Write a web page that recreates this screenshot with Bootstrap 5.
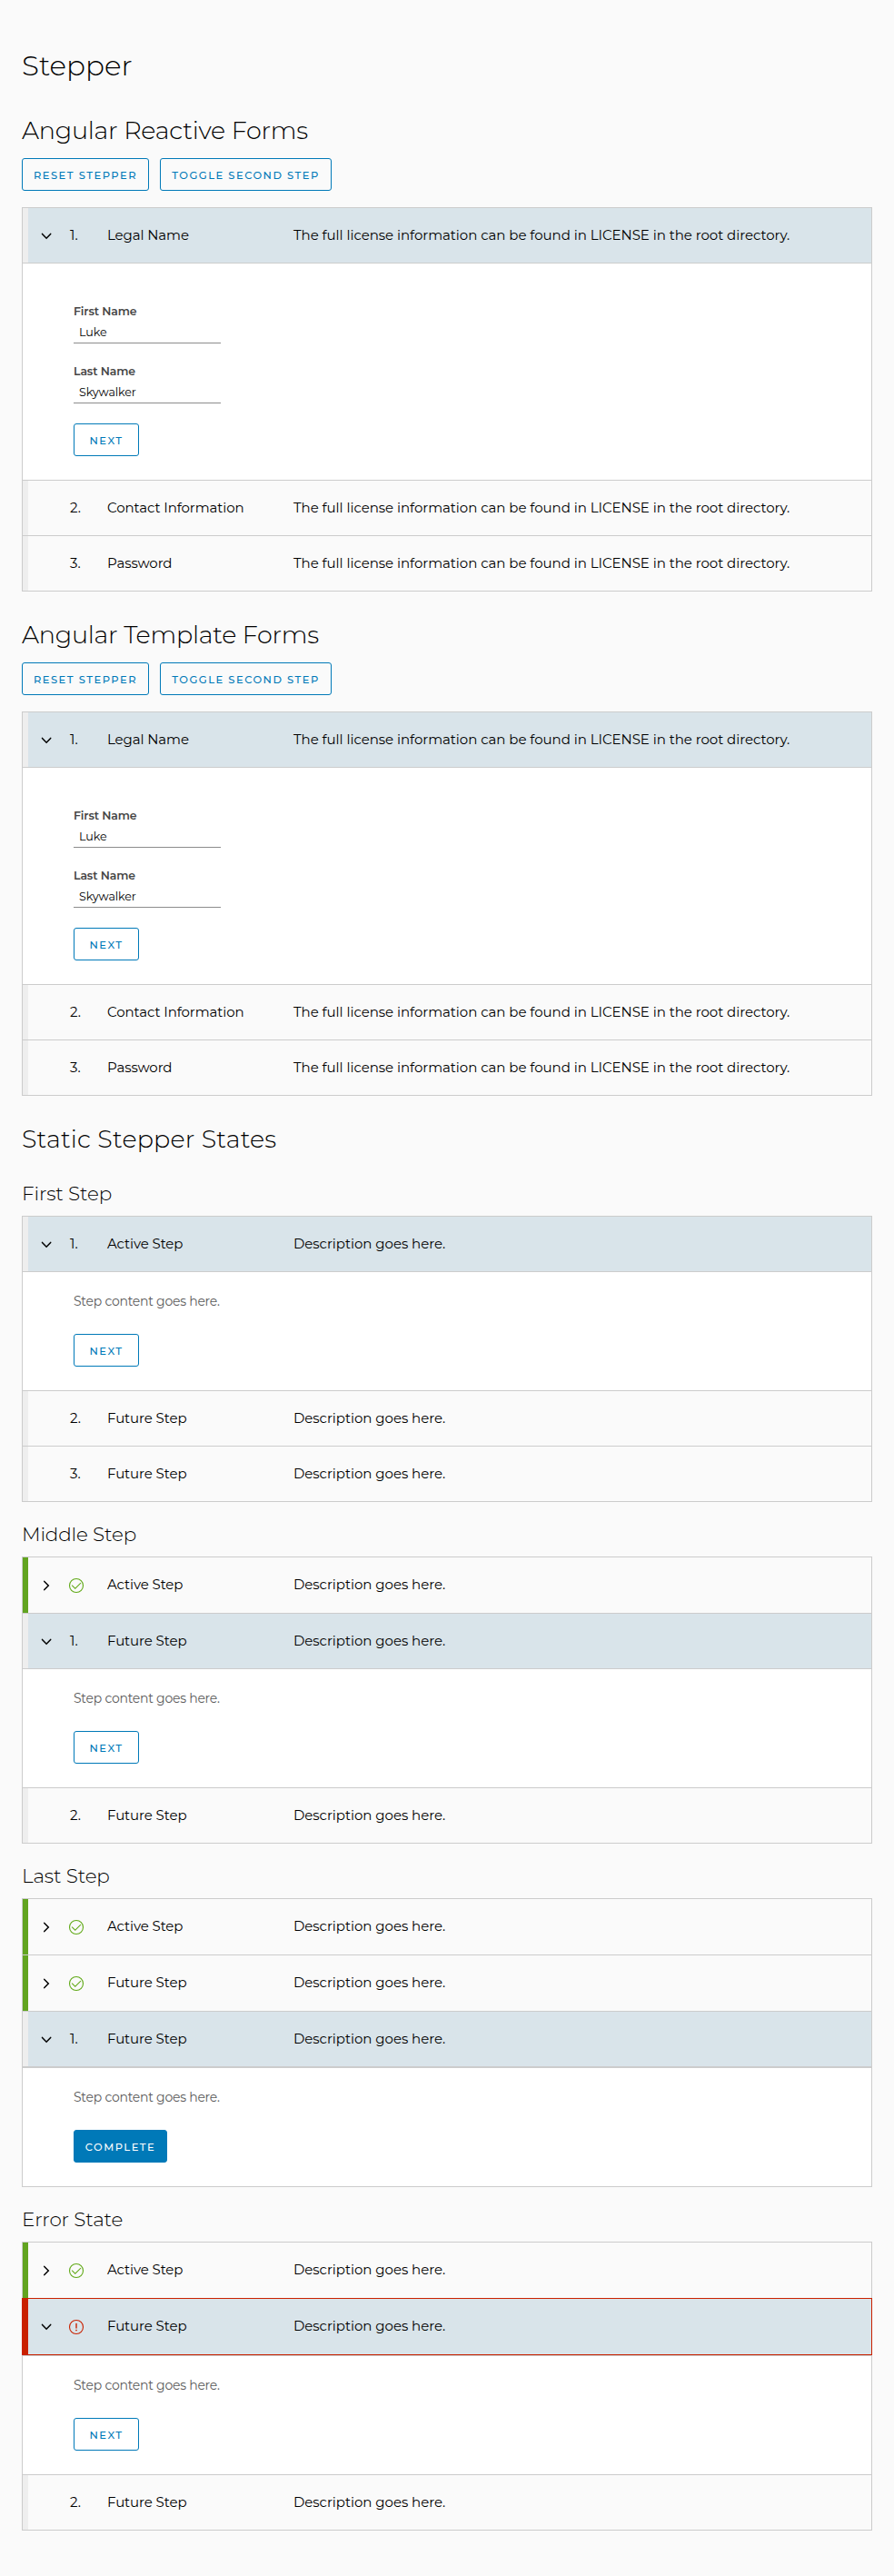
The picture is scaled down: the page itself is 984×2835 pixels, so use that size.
<!DOCTYPE html>
<html lang="en">
<head>
<meta charset="utf-8">
<meta name="viewport" content="width=device-width, initial-scale=1">
<title>Stepper</title>
<link rel="stylesheet" href="https://cdn.jsdelivr.net/npm/bootstrap@5.3.0/dist/css/bootstrap.min.css">
<script src="https://cdn.jsdelivr.net/npm/bootstrap@5.3.0/dist/js/bootstrap.bundle.min.js"></script>
<style>
body { font-family: Montserrat, Inter, "Liberation Sans", sans-serif; background: #fafafa; color: #000; font-size: 15px; line-height: 24px; }
h1, h2, h3 { font-weight: 300; margin: 0; color: #000; }
h1 { font-size: 31px; line-height: 48px; letter-spacing: 0; padding-top: 48px; }
h2 { font-size: 27px; line-height: 48px; letter-spacing: -.24px; margin-top: 24px; }
h2.static-title { letter-spacing: .18px; }
h3 { font-size: 21.5px; line-height: 24px; letter-spacing: -.15px; margin-top: 23px; padding-bottom: 13px; }
main { padding: 0 24px; }
.btn { --bs-btn-padding-x: 0; --bs-btn-padding-y: 0; --bs-btn-border-radius: 3px; --bs-btn-font-size: 11.5px; --bs-btn-font-weight: 500; height: 36px; line-height: 37px; letter-spacing: 1.5px; text-transform: uppercase; }
.btn-outline-primary { --bs-btn-color: #0079b8; --bs-btn-border-color: #0079b8; }
.btn-primary { --bs-btn-bg: #0079b8; --bs-btn-border-color: #0079b8; }
.w-reset { width: 140px; } .w-toggle { width: 189px; } .w-next { width: 72px; } .w-complete { width: 103px; }
.toolbar-row { gap: 12px; margin: 6px 0 18px; }
.stepper { border: 1px solid #ccc; border-bottom: 0; }
.step-head { height: 61px; border-bottom: 1px solid #ccc; }
.step-head::before { content: ""; align-self: stretch; width: 6px; background: #eee; }
.step-head.done, .step-head.failed { height: 62px; padding-bottom: 1px; }
.step-head.done::before { background: #62a420; margin-bottom: -1px; }
.step-head.active { background: #d9e4ea; }
.step-head.failed { height: 63px; border: 1px solid #c92100; margin: -1px -1px 0; }
.step-head.failed::before { background: #c92100; margin-bottom: -1px; }
.caret { width: 40px; height: 20px; margin-top: 2px; }
.state { width: 47px; padding-left: 6px; }
.state svg { display: block; margin: 2px 0 0 -2px; }
.title { width: 205px; letter-spacing: -.1px; }
.desc { letter-spacing: -.05px; }
.panel { background: #fff; border-bottom: 1px solid #ccc; padding: 20px 56px 26px; height: 131px; }
.panel p { margin: 0 0 24px; font-size: 14px; letter-spacing: -.25px; color: #5c5c5c; }
.panel.ruled { border-top: 1px solid #ccc; height: 132px; }
.form-panel { height: 239px; padding-top: 44px; }
.form-panel label { display: block; font-size: 12.5px; font-weight: 600; color: #454545; line-height: 18px; letter-spacing: -.12px; }
.form-panel input { display: block; width: 162px; height: 26px; border: 0; border-bottom: 1px solid #8c8c8c; padding: 1px 6px 0; font-size: 12.7px; letter-spacing: -.1px; color: #000; background: none; margin-bottom: 22px; outline: 0; }
</style>
</head>
<body>
<svg width="0" height="0" class="position-absolute" aria-hidden="true">
  <symbol id="down" viewBox="0 0 40 20"><path d="M15.5 7.4l4.6 4.8 4.6-4.8" fill="none" stroke="#000" stroke-width="1.5" stroke-linecap="round"/></symbol>
  <symbol id="right" viewBox="0 0 40 20"><path d="M17.8 5.4l4.5 4.6-4.5 4.6" fill="none" stroke="#000" stroke-width="1.5" stroke-linecap="round"/></symbol>
  <symbol id="check" viewBox="0 0 36 36"><circle cx="18" cy="18" r="15" fill="none" stroke="#60a917" stroke-width="2.2"/><path fill="#60a917" d="M28 12.1a1 1 0 0 0-1.41 0L15.49 23.15l-6-6A1 1 0 0 0 8 18.53L15.49 26 28 13.52a1 1 0 0 0 0-1.42z"/></symbol>
  <symbol id="alert" viewBox="0 0 36 36"><circle cx="18" cy="18" r="15" fill="none" stroke="#c92100" stroke-width="2.2"/><path d="M18 11v9" stroke="#c92100" stroke-width="2.8" stroke-linecap="round"/><circle cx="18" cy="25" r="1.7" fill="#c92100"/></symbol>
</svg>
<main>
  <h1>Stepper</h1>

  <h2>Angular Reactive Forms</h2>
  <div class="d-flex toolbar-row">
    <button class="btn btn-outline-primary w-reset">Reset Stepper</button>
    <button class="btn btn-outline-primary w-toggle">Toggle Second Step</button>
  </div>
  <div class="stepper">
    <div class="step-head active d-flex align-items-center"><svg class="caret"><use href="#down"/></svg><span class="state">1.</span><span class="title">Legal Name</span><span class="desc">The full license information can be found in LICENSE in the root directory.</span></div>
    <div class="panel form-panel">
      <label for="rf">First Name</label><input id="rf" value="Luke">
      <label for="rl">Last Name</label><input id="rl" value="Skywalker">
      <button class="btn btn-outline-primary w-next">Next</button>
    </div>
    <div class="step-head d-flex align-items-center"><span class="caret"></span><span class="state">2.</span><span class="title">Contact Information</span><span class="desc">The full license information can be found in LICENSE in the root directory.</span></div>
    <div class="step-head d-flex align-items-center"><span class="caret"></span><span class="state">3.</span><span class="title">Password</span><span class="desc">The full license information can be found in LICENSE in the root directory.</span></div>
  </div>

  <h2>Angular Template Forms</h2>
  <div class="d-flex toolbar-row">
    <button class="btn btn-outline-primary w-reset">Reset Stepper</button>
    <button class="btn btn-outline-primary w-toggle">Toggle Second Step</button>
  </div>
  <div class="stepper">
    <div class="step-head active d-flex align-items-center"><svg class="caret"><use href="#down"/></svg><span class="state">1.</span><span class="title">Legal Name</span><span class="desc">The full license information can be found in LICENSE in the root directory.</span></div>
    <div class="panel form-panel">
      <label for="tf">First Name</label><input id="tf" value="Luke">
      <label for="tl">Last Name</label><input id="tl" value="Skywalker">
      <button class="btn btn-outline-primary w-next">Next</button>
    </div>
    <div class="step-head d-flex align-items-center"><span class="caret"></span><span class="state">2.</span><span class="title">Contact Information</span><span class="desc">The full license information can be found in LICENSE in the root directory.</span></div>
    <div class="step-head d-flex align-items-center"><span class="caret"></span><span class="state">3.</span><span class="title">Password</span><span class="desc">The full license information can be found in LICENSE in the root directory.</span></div>
  </div>

  <h2 class="static-title">Static Stepper States</h2>

  <h3>First Step</h3>
  <div class="stepper">
    <div class="step-head active d-flex align-items-center"><svg class="caret"><use href="#down"/></svg><span class="state">1.</span><span class="title">Active Step</span><span class="desc">Description goes here.</span></div>
    <div class="panel"><p>Step content goes here.</p><button class="btn btn-outline-primary w-next">Next</button></div>
    <div class="step-head d-flex align-items-center"><span class="caret"></span><span class="state">2.</span><span class="title">Future Step</span><span class="desc">Description goes here.</span></div>
    <div class="step-head d-flex align-items-center"><span class="caret"></span><span class="state">3.</span><span class="title">Future Step</span><span class="desc">Description goes here.</span></div>
  </div>

  <h3>Middle Step</h3>
  <div class="stepper">
    <div class="step-head done d-flex align-items-center"><svg class="caret"><use href="#right"/></svg><span class="state"><svg width="18" height="18"><use href="#check"/></svg></span><span class="title">Active Step</span><span class="desc">Description goes here.</span></div>
    <div class="step-head active d-flex align-items-center"><svg class="caret"><use href="#down"/></svg><span class="state">1.</span><span class="title">Future Step</span><span class="desc">Description goes here.</span></div>
    <div class="panel"><p>Step content goes here.</p><button class="btn btn-outline-primary w-next">Next</button></div>
    <div class="step-head d-flex align-items-center"><span class="caret"></span><span class="state">2.</span><span class="title">Future Step</span><span class="desc">Description goes here.</span></div>
  </div>

  <h3>Last Step</h3>
  <div class="stepper">
    <div class="step-head done d-flex align-items-center"><svg class="caret"><use href="#right"/></svg><span class="state"><svg width="18" height="18"><use href="#check"/></svg></span><span class="title">Active Step</span><span class="desc">Description goes here.</span></div>
    <div class="step-head done d-flex align-items-center"><svg class="caret"><use href="#right"/></svg><span class="state"><svg width="18" height="18"><use href="#check"/></svg></span><span class="title">Future Step</span><span class="desc">Description goes here.</span></div>
    <div class="step-head active d-flex align-items-center"><svg class="caret"><use href="#down"/></svg><span class="state">1.</span><span class="title">Future Step</span><span class="desc">Description goes here.</span></div>
    <div class="panel ruled"><p>Step content goes here.</p><button class="btn btn-primary w-complete">Complete</button></div>
  </div>

  <h3>Error State</h3>
  <div class="stepper">
    <div class="step-head done d-flex align-items-center"><svg class="caret"><use href="#right"/></svg><span class="state"><svg width="18" height="18"><use href="#check"/></svg></span><span class="title">Active Step</span><span class="desc">Description goes here.</span></div>
    <div class="step-head active failed d-flex align-items-center"><svg class="caret"><use href="#down"/></svg><span class="state"><svg width="18" height="18"><use href="#alert"/></svg></span><span class="title">Future Step</span><span class="desc">Description goes here.</span></div>
    <div class="panel ruled"><p>Step content goes here.</p><button class="btn btn-outline-primary w-next">Next</button></div>
    <div class="step-head d-flex align-items-center"><span class="caret"></span><span class="state">2.</span><span class="title">Future Step</span><span class="desc">Description goes here.</span></div>
  </div>
</main>
</body>
</html>
